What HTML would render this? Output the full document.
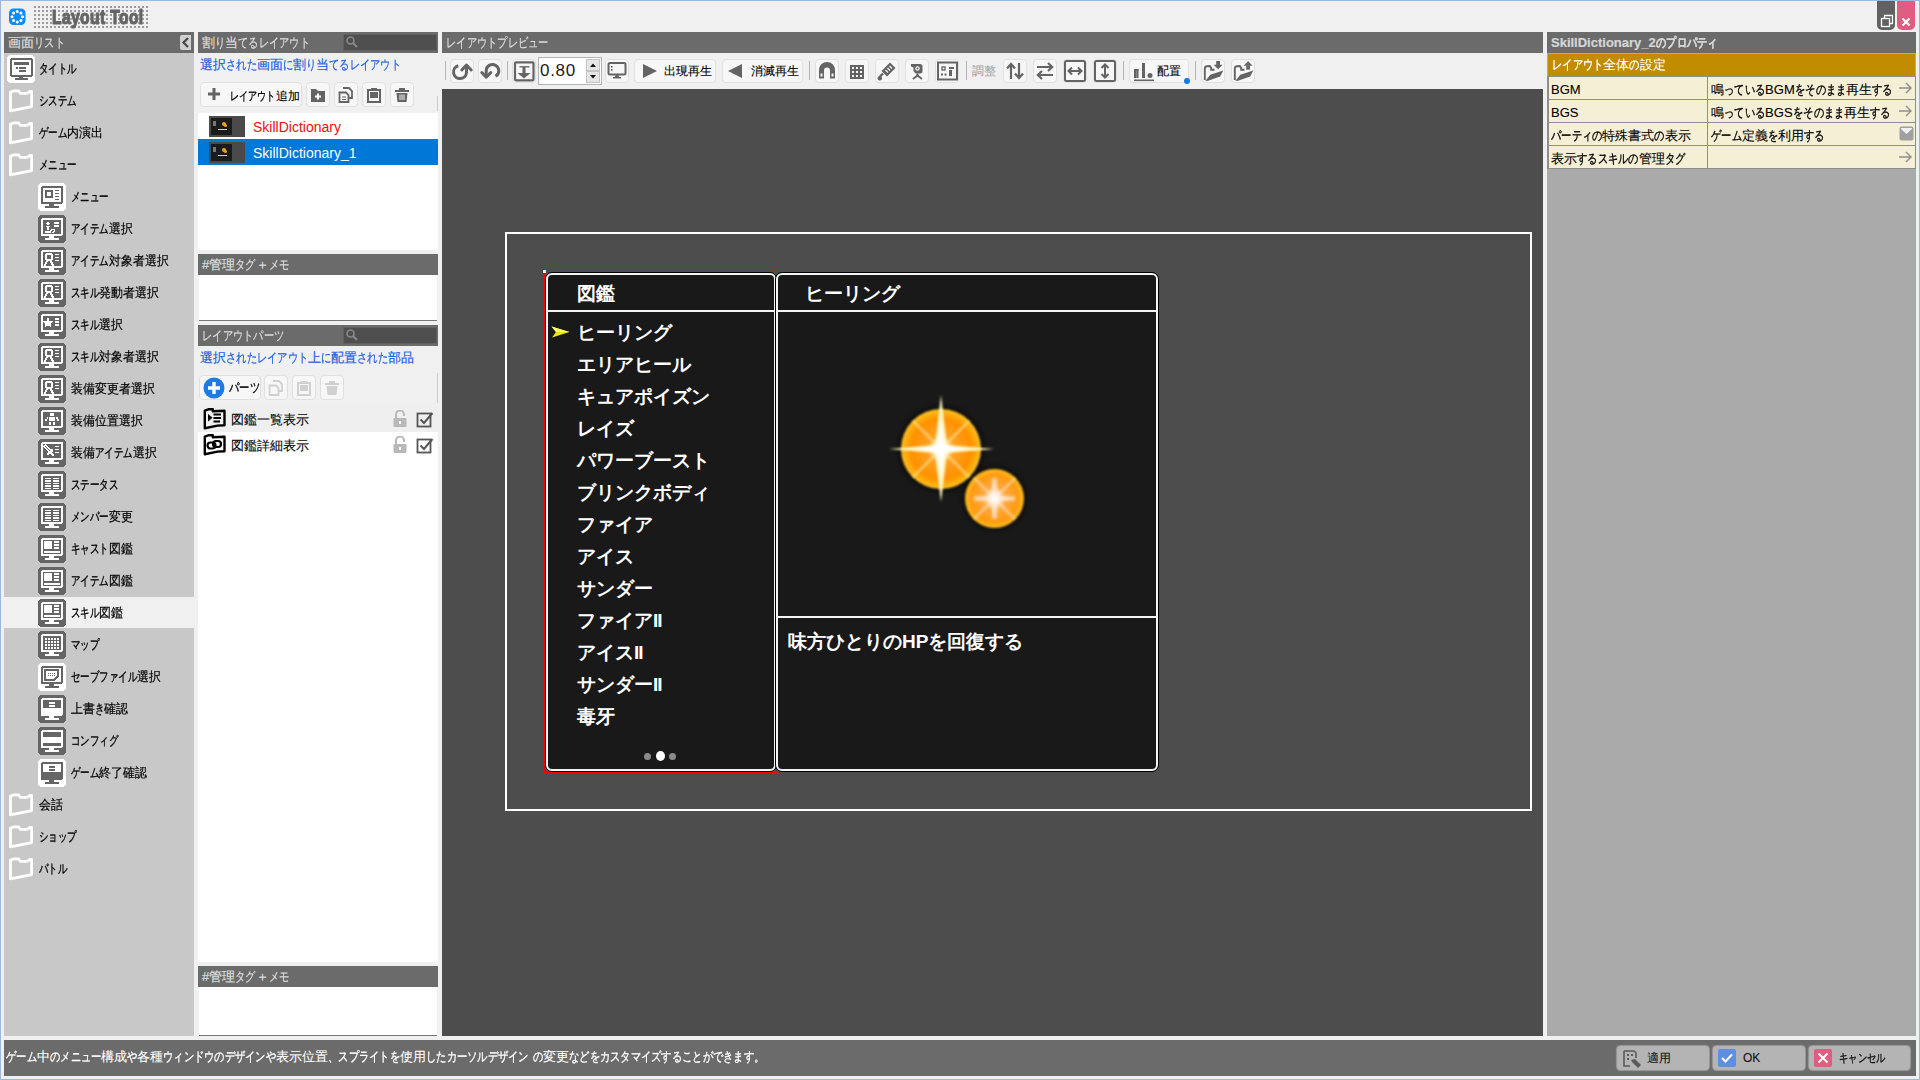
<!DOCTYPE html>
<html><head><meta charset="utf-8"><style>
*{box-sizing:border-box;margin:0;padding:0}
html,body{width:1920px;height:1080px;overflow:hidden}
body{position:relative;background:#f0f0f0;font-family:"Liberation Sans",sans-serif;font-size:13px;color:#000}
.a{position:absolute}
svg.a{display:block}
.hdr{position:absolute;background:#6b6b6b;color:#dedede;font-size:13px;line-height:21px;padding-left:4px;white-space:nowrap}
.srch{position:absolute;background:#4f4f4f;border:1px solid #616161}
.blue{position:absolute;color:#1e60e6;font-size:13px;white-space:nowrap;line-height:16px}
.btn{position:absolute;background:#f7f7f7;border:1px solid #e0e0e0;border-radius:4px}
.lt{font-size:13px;line-height:16px;white-space:nowrap;-webkit-text-stroke:0.1px currentColor}
.lt .k{-webkit-text-stroke:0.35px currentColor}
.lt .h{-webkit-text-stroke:0.2px currentColor}
.blue,.hdr{-webkit-text-stroke:0.2px currentColor}
.s12{-webkit-text-stroke:0.1px currentColor}
</style></head><body>
<div class="a" style="left:0;top:0;width:1920px;height:1080px;border:1px solid #9cb9da"></div>
<div class="hdr" style="left:4px;top:32px;width:190px;height:21px">画面<span class="k" style="display:inline-block;transform:scaleX(0.79);transform-origin:0 0;margin-right:-8.19px">リスト</span></div>
<div class="a" style="left:180px;top:35px;width:11px;height:15px;background:#d0d0d0;border-radius:2px 0 0 2px"></div>
<svg class="a" style="left:180px;top:35px" width="11" height="15" viewBox="0 0 11 15"><path d="M8 3 L3.5 7.5 L8 12" fill="none" stroke="#4a4a4a" stroke-width="2.3"/></svg>
<div class="a" style="left:4px;top:53px;width:190px;height:983px;background:#c8c8c8"></div>
<div class="a" style="left:4px;top:597px;width:190px;height:31px;background:#f0f0f0"></div>
<div class="a" style="left:7px;top:55px"><svg width="28" height="28" viewBox="0 0 28 28" shape-rendering="crispEdges"><rect x="0" y="0" width="28" height="28" rx="4" fill="#fff"/><rect x="4" y="4" width="21" height="17" fill="none" stroke="#656565" stroke-width="2.2" rx="1.5"/><rect x="7" y="7" width="15" height="3" fill="#656565"/><rect x="9" y="12" width="1.6" height="1.6" fill="#656565"/><rect x="12" y="12" width="7" height="1.6" fill="#656565"/><rect x="12" y="15" width="7" height="1.6" fill="#656565"/><rect x="12" y="21" width="4" height="2" fill="#656565"/><rect x="8" y="23" width="13" height="2" fill="#656565"/></svg></div>
<div class="a lt" style="left:39px;top:61px"><span class="k" style="display:inline-block;transform:scaleX(0.73);transform-origin:0 0;margin-right:-14.04px">タイトル</span></div>
<div class="a" style="left:8px;top:89px"><svg width="26" height="24" viewBox="0 0 26 24"><path d="M2.5 3.2 L6 1.8 L10.5 1.8 L12.5 4.3 L19 4.3 L22.5 2.3 L23.6 2.3 L23.6 17.6 L2.5 21.8 Z" fill="none" stroke="#fff" stroke-width="2.8" stroke-linejoin="round"/></svg></div>
<div class="a lt" style="left:39px;top:93px"><span class="k" style="display:inline-block;transform:scaleX(0.73);transform-origin:0 0;margin-right:-14.04px">システム</span></div>
<div class="a" style="left:8px;top:121px"><svg width="26" height="24" viewBox="0 0 26 24"><path d="M2.5 3.2 L6 1.8 L10.5 1.8 L12.5 4.3 L19 4.3 L22.5 2.3 L23.6 2.3 L23.6 17.6 L2.5 21.8 Z" fill="none" stroke="#fff" stroke-width="2.8" stroke-linejoin="round"/></svg></div>
<div class="a lt" style="left:39px;top:125px"><span class="k" style="display:inline-block;transform:scaleX(0.73);transform-origin:0 0;margin-right:-10.53px">ゲーム</span><span class="h" style="display:inline-block;transform:scaleX(0.92);transform-origin:0 0;margin-right:-3.12px">内演出</span></div>
<div class="a" style="left:8px;top:153px"><svg width="26" height="24" viewBox="0 0 26 24"><path d="M2.5 3.2 L6 1.8 L10.5 1.8 L12.5 4.3 L19 4.3 L22.5 2.3 L23.6 2.3 L23.6 17.6 L2.5 21.8 Z" fill="none" stroke="#fff" stroke-width="2.8" stroke-linejoin="round"/></svg></div>
<div class="a lt" style="left:39px;top:157px"><span class="k" style="display:inline-block;transform:scaleX(0.73);transform-origin:0 0;margin-right:-14.04px">メニュー</span></div>
<div class="a" style="left:38px;top:183px"><svg width="28" height="28" viewBox="0 0 28 28" shape-rendering="crispEdges"><rect x="0" y="0" width="28" height="28" rx="4" fill="#fff"/><rect x="4" y="4" width="20" height="16" fill="none" stroke="#656565" stroke-width="2" rx="1"/><rect x="11" y="21" width="5" height="2" fill="#656565"/><rect x="7" y="23" width="14" height="2" fill="#656565"/><rect x="8" y="7.5" width="6" height="6" fill="none" stroke="#656565" stroke-width="2"/><rect x="17" y="6.5" width="4" height="1.6" fill="#656565"/><rect x="17" y="9.5" width="4" height="1.6" fill="#656565"/><rect x="17" y="12.5" width="4" height="1.6" fill="#656565"/><rect x="17" y="15.5" width="4" height="1.6" fill="#656565"/></svg></div>
<div class="a lt" style="left:71px;top:189px"><span class="k" style="display:inline-block;transform:scaleX(0.73);transform-origin:0 0;margin-right:-14.04px">メニュー</span></div>
<div class="a" style="left:38px;top:215px"><svg width="28" height="28" viewBox="0 0 28 28" shape-rendering="crispEdges"><rect x="0" y="0" width="28" height="28" rx="4" fill="#656565"/><rect x="4" y="4" width="20" height="16" fill="none" stroke="#fff" stroke-width="2" rx="1"/><rect x="11" y="21" width="5" height="2" fill="#fff"/><rect x="7" y="23" width="14" height="2" fill="#fff"/><circle cx="10" cy="8.5" r="1.6" fill="#fff"/><rect x="8" y="10.5" width="4" height="1.6" fill="#fff"/><rect x="9.3" y="11" width="1.6" height="4" fill="#fff"/><path d="M6.5 15.5 L13.5 15.5 L12.5 18 L7.5 18 Z" fill="#fff"/><path d="M13 16 Q15 13 16.5 15 Q16 17.5 14 17.5" fill="none" stroke="#fff" stroke-width="1.4"/><rect x="16" y="7" width="5" height="1.6" fill="#fff"/><rect x="16" y="10" width="5" height="1.6" fill="#fff"/></svg></div>
<div class="a lt" style="left:71px;top:221px"><span class="k" style="display:inline-block;transform:scaleX(0.73);transform-origin:0 0;margin-right:-14.04px">アイテム</span><span class="h" style="display:inline-block;transform:scaleX(0.92);transform-origin:0 0;margin-right:-2.08px">選択</span></div>
<div class="a" style="left:38px;top:247px"><svg width="28" height="28" viewBox="0 0 28 28" shape-rendering="crispEdges"><rect x="0" y="0" width="28" height="28" rx="4" fill="#656565"/><rect x="4" y="4" width="20" height="16" fill="none" stroke="#fff" stroke-width="2" rx="1"/><rect x="11" y="21" width="5" height="2" fill="#fff"/><rect x="7" y="23" width="14" height="2" fill="#fff"/><circle cx="11" cy="10" r="3.4" fill="none" stroke="#fff" stroke-width="2"/><path d="M6.5 19.5 L9.5 13.5 M15.5 19.5 L12.5 13.5" stroke="#fff" stroke-width="1.8"/><rect x="16.5" y="6.5" width="4.5" height="1.6" fill="#fff"/><rect x="16.5" y="9.5" width="4.5" height="1.6" fill="#fff"/><rect x="16.5" y="12.5" width="4.5" height="1.6" fill="#fff"/></svg></div>
<div class="a lt" style="left:71px;top:253px"><span class="k" style="display:inline-block;transform:scaleX(0.73);transform-origin:0 0;margin-right:-14.04px">アイテム</span><span class="h" style="display:inline-block;transform:scaleX(0.92);transform-origin:0 0;margin-right:-5.20px">対象者選択</span></div>
<div class="a" style="left:38px;top:279px"><svg width="28" height="28" viewBox="0 0 28 28" shape-rendering="crispEdges"><rect x="0" y="0" width="28" height="28" rx="4" fill="#656565"/><rect x="4" y="4" width="20" height="16" fill="none" stroke="#fff" stroke-width="2" rx="1"/><rect x="11" y="21" width="5" height="2" fill="#fff"/><rect x="7" y="23" width="14" height="2" fill="#fff"/><circle cx="11" cy="10" r="3.4" fill="none" stroke="#fff" stroke-width="2"/><path d="M6.5 19.5 L9.5 13.5 M15.5 19.5 L12.5 13.5" stroke="#fff" stroke-width="1.8"/><rect x="16.5" y="6.5" width="4.5" height="1.6" fill="#fff"/><rect x="16.5" y="9.5" width="4.5" height="1.6" fill="#fff"/><rect x="16.5" y="12.5" width="4.5" height="1.6" fill="#fff"/></svg></div>
<div class="a lt" style="left:71px;top:285px"><span class="k" style="display:inline-block;transform:scaleX(0.73);transform-origin:0 0;margin-right:-10.53px">スキル</span><span class="h" style="display:inline-block;transform:scaleX(0.92);transform-origin:0 0;margin-right:-5.20px">発動者選択</span></div>
<div class="a" style="left:38px;top:311px"><svg width="28" height="28" viewBox="0 0 28 28" shape-rendering="crispEdges"><rect x="0" y="0" width="28" height="28" rx="4" fill="#656565"/><rect x="4" y="4" width="20" height="16" fill="none" stroke="#fff" stroke-width="2" rx="1"/><rect x="11" y="21" width="5" height="2" fill="#fff"/><rect x="7" y="23" width="14" height="2" fill="#fff"/><path d="M10 6 L11.6 10.2 L15.6 10.2 L12.4 12.8 L13.6 17 L10 14.4 L6.4 17 L7.6 12.8 L4.4 10.2 L8.4 10.2 Z" fill="#fff"/><rect x="17" y="7" width="4" height="1.6" fill="#fff"/><rect x="17" y="10" width="4" height="1.6" fill="#fff"/><rect x="17" y="13" width="4" height="1.6" fill="#fff"/></svg></div>
<div class="a lt" style="left:71px;top:317px"><span class="k" style="display:inline-block;transform:scaleX(0.73);transform-origin:0 0;margin-right:-10.53px">スキル</span><span class="h" style="display:inline-block;transform:scaleX(0.92);transform-origin:0 0;margin-right:-2.08px">選択</span></div>
<div class="a" style="left:38px;top:343px"><svg width="28" height="28" viewBox="0 0 28 28" shape-rendering="crispEdges"><rect x="0" y="0" width="28" height="28" rx="4" fill="#656565"/><rect x="4" y="4" width="20" height="16" fill="none" stroke="#fff" stroke-width="2" rx="1"/><rect x="11" y="21" width="5" height="2" fill="#fff"/><rect x="7" y="23" width="14" height="2" fill="#fff"/><circle cx="11" cy="10" r="3.4" fill="none" stroke="#fff" stroke-width="2"/><path d="M6.5 19.5 L9.5 13.5 M15.5 19.5 L12.5 13.5" stroke="#fff" stroke-width="1.8"/><rect x="16.5" y="6.5" width="4.5" height="1.6" fill="#fff"/><rect x="16.5" y="9.5" width="4.5" height="1.6" fill="#fff"/><rect x="16.5" y="12.5" width="4.5" height="1.6" fill="#fff"/></svg></div>
<div class="a lt" style="left:71px;top:349px"><span class="k" style="display:inline-block;transform:scaleX(0.73);transform-origin:0 0;margin-right:-10.53px">スキル</span><span class="h" style="display:inline-block;transform:scaleX(0.92);transform-origin:0 0;margin-right:-5.20px">対象者選択</span></div>
<div class="a" style="left:38px;top:375px"><svg width="28" height="28" viewBox="0 0 28 28" shape-rendering="crispEdges"><rect x="0" y="0" width="28" height="28" rx="4" fill="#656565"/><rect x="4" y="4" width="20" height="16" fill="none" stroke="#fff" stroke-width="2" rx="1"/><rect x="11" y="21" width="5" height="2" fill="#fff"/><rect x="7" y="23" width="14" height="2" fill="#fff"/><circle cx="11" cy="10" r="3.4" fill="none" stroke="#fff" stroke-width="2"/><path d="M6.5 19.5 L9.5 13.5 M15.5 19.5 L12.5 13.5" stroke="#fff" stroke-width="1.8"/><rect x="16.5" y="6.5" width="4.5" height="1.6" fill="#fff"/><rect x="16.5" y="9.5" width="4.5" height="1.6" fill="#fff"/><rect x="16.5" y="12.5" width="4.5" height="1.6" fill="#fff"/></svg></div>
<div class="a lt" style="left:71px;top:381px"><span class="h" style="display:inline-block;transform:scaleX(0.92);transform-origin:0 0;margin-right:-7.28px">装備変更者選択</span></div>
<div class="a" style="left:38px;top:407px"><svg width="28" height="28" viewBox="0 0 28 28" shape-rendering="crispEdges"><rect x="0" y="0" width="28" height="28" rx="4" fill="#656565"/><rect x="4" y="4" width="20" height="16" fill="none" stroke="#fff" stroke-width="2" rx="1"/><rect x="11" y="21" width="5" height="2" fill="#fff"/><rect x="7" y="23" width="14" height="2" fill="#fff"/><rect x="12" y="6" width="4" height="2.8" fill="#fff"/><rect x="11" y="10" width="6" height="3.6" fill="#fff"/><rect x="8.5" y="10" width="1.3" height="1.6" fill="#fff"/><rect x="7.2" y="11.5" width="1.5" height="2.1" fill="#fff"/><rect x="18.2" y="10" width="1.3" height="1.6" fill="#fff"/><rect x="19.3" y="11.5" width="1.5" height="2.1" fill="#fff"/><rect x="11" y="15" width="2" height="2.6" fill="#fff"/><rect x="15" y="15" width="2" height="2.6" fill="#fff"/></svg></div>
<div class="a lt" style="left:71px;top:413px"><span class="h" style="display:inline-block;transform:scaleX(0.92);transform-origin:0 0;margin-right:-6.24px">装備位置選択</span></div>
<div class="a" style="left:38px;top:439px"><svg width="28" height="28" viewBox="0 0 28 28" shape-rendering="crispEdges"><rect x="0" y="0" width="28" height="28" rx="4" fill="#656565"/><rect x="4" y="4" width="20" height="16" fill="none" stroke="#fff" stroke-width="2" rx="1"/><rect x="11" y="21" width="5" height="2" fill="#fff"/><rect x="7" y="23" width="14" height="2" fill="#fff"/><path d="M6 7.3 L7.3 6 L14 12.7 L12.7 14 Z" fill="none" stroke="#fff" stroke-width="1.3"/><path d="M9 15.8 L14.8 10" stroke="#fff" stroke-width="1.8"/><path d="M13.5 14.5 L15.8 16.8" stroke="#fff" stroke-width="1.8"/><rect x="16.5" y="6.5" width="4.5" height="1.6" fill="#fff"/><rect x="16.5" y="9.5" width="4.5" height="1.6" fill="#fff"/><rect x="16.5" y="12.5" width="4.5" height="1.6" fill="#fff"/></svg></div>
<div class="a lt" style="left:71px;top:445px"><span class="h" style="display:inline-block;transform:scaleX(0.92);transform-origin:0 0;margin-right:-2.08px">装備</span><span class="k" style="display:inline-block;transform:scaleX(0.73);transform-origin:0 0;margin-right:-14.04px">アイテム</span><span class="h" style="display:inline-block;transform:scaleX(0.92);transform-origin:0 0;margin-right:-2.08px">選択</span></div>
<div class="a" style="left:38px;top:471px"><svg width="28" height="28" viewBox="0 0 28 28" shape-rendering="crispEdges"><rect x="0" y="0" width="28" height="28" rx="4" fill="#656565"/><rect x="4" y="4" width="20" height="16" fill="none" stroke="#fff" stroke-width="2" rx="1"/><rect x="11" y="21" width="5" height="2" fill="#fff"/><rect x="7" y="23" width="14" height="2" fill="#fff"/><rect x="7" y="6.5" width="6" height="1.6" fill="#fff"/><rect x="15" y="6.5" width="6" height="1.6" fill="#fff"/><rect x="7" y="9" width="6" height="1.6" fill="#fff"/><rect x="15" y="9" width="6" height="1.6" fill="#fff"/><rect x="7" y="11.5" width="6" height="1.6" fill="#fff"/><rect x="15" y="11.5" width="6" height="1.6" fill="#fff"/><rect x="7" y="14" width="6" height="1.6" fill="#fff"/><rect x="15" y="14" width="6" height="1.6" fill="#fff"/><rect x="7" y="16.5" width="6" height="1.6" fill="#fff"/><rect x="15" y="16.5" width="6" height="1.6" fill="#fff"/></svg></div>
<div class="a lt" style="left:71px;top:477px"><span class="k" style="display:inline-block;transform:scaleX(0.73);transform-origin:0 0;margin-right:-17.55px">ステータス</span></div>
<div class="a" style="left:38px;top:503px"><svg width="28" height="28" viewBox="0 0 28 28" shape-rendering="crispEdges"><rect x="0" y="0" width="28" height="28" rx="4" fill="#656565"/><rect x="4" y="4" width="20" height="16" fill="none" stroke="#fff" stroke-width="2" rx="1"/><rect x="11" y="21" width="5" height="2" fill="#fff"/><rect x="7" y="23" width="14" height="2" fill="#fff"/><rect x="7" y="6.5" width="6" height="1.6" fill="#fff"/><rect x="15" y="6.5" width="6" height="1.6" fill="#fff"/><rect x="7" y="9" width="6" height="1.6" fill="#fff"/><rect x="15" y="9" width="6" height="1.6" fill="#fff"/><rect x="7" y="11.5" width="6" height="1.6" fill="#fff"/><rect x="15" y="11.5" width="6" height="1.6" fill="#fff"/><rect x="7" y="14" width="6" height="1.6" fill="#fff"/><rect x="15" y="14" width="6" height="1.6" fill="#fff"/><rect x="7" y="16.5" width="6" height="1.6" fill="#fff"/><rect x="15" y="16.5" width="6" height="1.6" fill="#fff"/></svg></div>
<div class="a lt" style="left:71px;top:509px"><span class="k" style="display:inline-block;transform:scaleX(0.73);transform-origin:0 0;margin-right:-14.04px">メンバー</span><span class="h" style="display:inline-block;transform:scaleX(0.92);transform-origin:0 0;margin-right:-2.08px">変更</span></div>
<div class="a" style="left:38px;top:535px"><svg width="28" height="28" viewBox="0 0 28 28" shape-rendering="crispEdges"><rect x="0" y="0" width="28" height="28" rx="4" fill="#656565"/><rect x="4" y="4" width="20" height="16" fill="none" stroke="#fff" stroke-width="2" rx="1"/><rect x="11" y="21" width="5" height="2" fill="#fff"/><rect x="7" y="23" width="14" height="2" fill="#fff"/><rect x="6" y="6" width="8" height="8" fill="#fff"/><rect x="15.5" y="6" width="5.5" height="1.8" fill="#fff"/><rect x="15.5" y="9" width="5.5" height="1.8" fill="#fff"/><rect x="15.5" y="12" width="5.5" height="1.8" fill="#fff"/><rect x="6" y="15.5" width="16" height="2" fill="#fff"/></svg></div>
<div class="a lt" style="left:71px;top:541px"><span class="k" style="display:inline-block;transform:scaleX(0.73);transform-origin:0 0;margin-right:-14.04px">キャスト</span><span class="h" style="display:inline-block;transform:scaleX(0.92);transform-origin:0 0;margin-right:-2.08px">図鑑</span></div>
<div class="a" style="left:38px;top:567px"><svg width="28" height="28" viewBox="0 0 28 28" shape-rendering="crispEdges"><rect x="0" y="0" width="28" height="28" rx="4" fill="#656565"/><rect x="4" y="4" width="20" height="16" fill="none" stroke="#fff" stroke-width="2" rx="1"/><rect x="11" y="21" width="5" height="2" fill="#fff"/><rect x="7" y="23" width="14" height="2" fill="#fff"/><rect x="6" y="6" width="8" height="8" fill="#fff"/><rect x="15.5" y="6" width="5.5" height="1.8" fill="#fff"/><rect x="15.5" y="9" width="5.5" height="1.8" fill="#fff"/><rect x="15.5" y="12" width="5.5" height="1.8" fill="#fff"/><rect x="6" y="15.5" width="16" height="2" fill="#fff"/></svg></div>
<div class="a lt" style="left:71px;top:573px"><span class="k" style="display:inline-block;transform:scaleX(0.73);transform-origin:0 0;margin-right:-14.04px">アイテム</span><span class="h" style="display:inline-block;transform:scaleX(0.92);transform-origin:0 0;margin-right:-2.08px">図鑑</span></div>
<div class="a" style="left:38px;top:599px"><svg width="28" height="28" viewBox="0 0 28 28" shape-rendering="crispEdges"><rect x="0" y="0" width="28" height="28" rx="4" fill="#656565"/><rect x="4" y="4" width="20" height="16" fill="none" stroke="#fff" stroke-width="2" rx="1"/><rect x="11" y="21" width="5" height="2" fill="#fff"/><rect x="7" y="23" width="14" height="2" fill="#fff"/><rect x="6" y="6" width="8" height="8" fill="#fff"/><rect x="15.5" y="6" width="5.5" height="1.8" fill="#fff"/><rect x="15.5" y="9" width="5.5" height="1.8" fill="#fff"/><rect x="15.5" y="12" width="5.5" height="1.8" fill="#fff"/><rect x="6" y="15.5" width="16" height="2" fill="#fff"/></svg></div>
<div class="a lt" style="left:71px;top:605px"><span class="k" style="display:inline-block;transform:scaleX(0.73);transform-origin:0 0;margin-right:-10.53px">スキル</span><span class="h" style="display:inline-block;transform:scaleX(0.92);transform-origin:0 0;margin-right:-2.08px">図鑑</span></div>
<div class="a" style="left:38px;top:631px"><svg width="28" height="28" viewBox="0 0 28 28" shape-rendering="crispEdges"><rect x="0" y="0" width="28" height="28" rx="4" fill="#656565"/><rect x="4" y="4" width="20" height="16" fill="none" stroke="#fff" stroke-width="2" rx="1"/><rect x="11" y="21" width="5" height="2" fill="#fff"/><rect x="7" y="23" width="14" height="2" fill="#fff"/><rect x="6.5" y="6.5" width="2" height="2" fill="#fff"/><rect x="9.5" y="6.5" width="2" height="2" fill="#fff"/><rect x="12.5" y="6.5" width="2" height="2" fill="#fff"/><rect x="15.5" y="6.5" width="2" height="2" fill="#fff"/><rect x="18.5" y="6.5" width="2" height="2" fill="#fff"/><rect x="6.5" y="9.5" width="2" height="2" fill="#fff"/><rect x="9.5" y="9.5" width="2" height="2" fill="#fff"/><rect x="12.5" y="9.5" width="2" height="2" fill="#fff"/><rect x="15.5" y="9.5" width="2" height="2" fill="#fff"/><rect x="18.5" y="9.5" width="2" height="2" fill="#fff"/><rect x="6.5" y="12.5" width="2" height="2" fill="#fff"/><rect x="9.5" y="12.5" width="2" height="2" fill="#fff"/><rect x="12.5" y="12.5" width="2" height="2" fill="#fff"/><rect x="15.5" y="12.5" width="2" height="2" fill="#fff"/><rect x="18.5" y="12.5" width="2" height="2" fill="#fff"/><rect x="6.5" y="15.5" width="2" height="2" fill="#fff"/><rect x="9.5" y="15.5" width="2" height="2" fill="#fff"/><rect x="12.5" y="15.5" width="2" height="2" fill="#fff"/><rect x="15.5" y="15.5" width="2" height="2" fill="#fff"/><rect x="18.5" y="15.5" width="2" height="2" fill="#fff"/></svg></div>
<div class="a lt" style="left:71px;top:637px"><span class="k" style="display:inline-block;transform:scaleX(0.73);transform-origin:0 0;margin-right:-10.53px">マップ</span></div>
<div class="a" style="left:38px;top:663px"><svg width="28" height="28" viewBox="0 0 28 28" shape-rendering="crispEdges"><rect x="0" y="0" width="28" height="28" rx="4" fill="#fff"/><rect x="4" y="4" width="20" height="16" fill="none" stroke="#656565" stroke-width="2" rx="1"/><rect x="11" y="21" width="5" height="2" fill="#656565"/><rect x="7" y="23" width="14" height="2" fill="#656565"/><path d="M7 7 L19.5 7 L19.5 13.5 L16.5 16.5 L7 16.5 Z" fill="none" stroke="#656565" stroke-width="2"/><rect x="9.5" y="9.5" width="1.2" height="1.2" fill="#656565"/><rect x="11.5" y="9.5" width="1.2" height="1.2" fill="#656565"/><rect x="13.5" y="9.5" width="1.2" height="1.2" fill="#656565"/><rect x="15.5" y="9.5" width="1.2" height="1.2" fill="#656565"/><rect x="9.5" y="12" width="1.2" height="1.2" fill="#656565"/><rect x="11.5" y="12" width="1.2" height="1.2" fill="#656565"/><rect x="13.5" y="12" width="1.2" height="1.2" fill="#656565"/><rect x="15.5" y="12" width="1.2" height="1.2" fill="#656565"/></svg></div>
<div class="a lt" style="left:71px;top:669px"><span class="k" style="display:inline-block;transform:scaleX(0.73);transform-origin:0 0;margin-right:-24.57px">セーブファイル</span><span class="h" style="display:inline-block;transform:scaleX(0.92);transform-origin:0 0;margin-right:-2.08px">選択</span></div>
<div class="a" style="left:38px;top:695px"><svg width="28" height="28" viewBox="0 0 28 28" shape-rendering="crispEdges"><rect x="0" y="0" width="28" height="28" rx="4" fill="#656565"/><rect x="4" y="4" width="20" height="16" fill="none" stroke="#fff" stroke-width="2" rx="1"/><rect x="11" y="21" width="5" height="2" fill="#fff"/><rect x="7" y="23" width="14" height="2" fill="#fff"/><rect x="11" y="7" width="6" height="1.8" fill="#fff"/><rect x="11" y="10" width="6" height="1.8" fill="#fff"/><rect x="5" y="13" width="18" height="6" fill="#fff"/></svg></div>
<div class="a lt" style="left:71px;top:701px"><span class="h" style="display:inline-block;transform:scaleX(0.92);transform-origin:0 0;margin-right:-2.08px">上書</span><span class="k" style="display:inline-block;transform:scaleX(0.73);transform-origin:0 0;margin-right:-3.51px">き</span><span class="h" style="display:inline-block;transform:scaleX(0.92);transform-origin:0 0;margin-right:-2.08px">確認</span></div>
<div class="a" style="left:38px;top:727px"><svg width="28" height="28" viewBox="0 0 28 28" shape-rendering="crispEdges"><rect x="0" y="0" width="28" height="28" rx="4" fill="#656565"/><rect x="4" y="4" width="20" height="16" fill="none" stroke="#fff" stroke-width="2" rx="1"/><rect x="11" y="21" width="5" height="2" fill="#fff"/><rect x="7" y="23" width="14" height="2" fill="#fff"/><rect x="5" y="10" width="18" height="6" fill="#fff"/></svg></div>
<div class="a lt" style="left:71px;top:733px"><span class="k" style="display:inline-block;transform:scaleX(0.73);transform-origin:0 0;margin-right:-17.55px">コンフィグ</span></div>
<div class="a" style="left:38px;top:759px"><svg width="28" height="28" viewBox="0 0 28 28" shape-rendering="crispEdges"><rect x="0" y="0" width="28" height="28" rx="4" fill="#fff"/><rect x="4" y="4" width="20" height="16" fill="none" stroke="#656565" stroke-width="2" rx="1"/><rect x="11" y="21" width="5" height="2" fill="#656565"/><rect x="7" y="23" width="14" height="2" fill="#656565"/><rect x="11" y="7" width="6" height="1.8" fill="#656565"/><rect x="11" y="10" width="6" height="1.8" fill="#656565"/><rect x="5" y="13" width="18" height="6" fill="#656565"/></svg></div>
<div class="a lt" style="left:71px;top:765px"><span class="k" style="display:inline-block;transform:scaleX(0.73);transform-origin:0 0;margin-right:-10.53px">ゲーム</span><span class="h" style="display:inline-block;transform:scaleX(0.92);transform-origin:0 0;margin-right:-4.16px">終了確認</span></div>
<div class="a" style="left:8px;top:793px"><svg width="26" height="24" viewBox="0 0 26 24"><path d="M2.5 3.2 L6 1.8 L10.5 1.8 L12.5 4.3 L19 4.3 L22.5 2.3 L23.6 2.3 L23.6 17.6 L2.5 21.8 Z" fill="none" stroke="#fff" stroke-width="2.8" stroke-linejoin="round"/></svg></div>
<div class="a lt" style="left:39px;top:797px"><span class="h" style="display:inline-block;transform:scaleX(0.92);transform-origin:0 0;margin-right:-2.08px">会話</span></div>
<div class="a" style="left:8px;top:825px"><svg width="26" height="24" viewBox="0 0 26 24"><path d="M2.5 3.2 L6 1.8 L10.5 1.8 L12.5 4.3 L19 4.3 L22.5 2.3 L23.6 2.3 L23.6 17.6 L2.5 21.8 Z" fill="none" stroke="#fff" stroke-width="2.8" stroke-linejoin="round"/></svg></div>
<div class="a lt" style="left:39px;top:829px"><span class="k" style="display:inline-block;transform:scaleX(0.73);transform-origin:0 0;margin-right:-14.04px">ショップ</span></div>
<div class="a" style="left:8px;top:857px"><svg width="26" height="24" viewBox="0 0 26 24"><path d="M2.5 3.2 L6 1.8 L10.5 1.8 L12.5 4.3 L19 4.3 L22.5 2.3 L23.6 2.3 L23.6 17.6 L2.5 21.8 Z" fill="none" stroke="#fff" stroke-width="2.8" stroke-linejoin="round"/></svg></div>
<div class="a lt" style="left:39px;top:861px"><span class="k" style="display:inline-block;transform:scaleX(0.73);transform-origin:0 0;margin-right:-10.53px">バトル</span></div>
<svg class="a" style="left:8px;top:7px" width="19" height="19" viewBox="0 0 19 19"><rect x="1" y="1.5" width="16.5" height="16.5" rx="4.5" fill="#0a8cf5"/><circle cx="14.45" cy="9.75" r="1.5" fill="#fff"/><circle cx="12.93" cy="13.43" r="1.5" fill="#fff"/><circle cx="9.25" cy="14.95" r="1.5" fill="#fff"/><circle cx="5.57" cy="13.43" r="1.5" fill="#fff"/><circle cx="4.05" cy="9.75" r="1.5" fill="#fff"/><circle cx="5.57" cy="6.07" r="1.5" fill="#fff"/><circle cx="9.25" cy="4.55" r="1.5" fill="#fff"/><circle cx="12.93" cy="6.07" r="1.5" fill="#fff"/></svg>
<div class="a" style="left:34px;top:6px;width:115px;height:23px;background-image:linear-gradient(90deg,#f0f0f0 2px,transparent 2px),linear-gradient(#f0f0f0 2px,transparent 2px);background-size:4px 4px;background-position:2px 2px;background-color:#9a9a9a;"></div>
<div class="a" style="left:52px;top:5px;font-family:'Liberation Sans',sans-serif;font-weight:bold;font-size:20px;line-height:24px;color:#656565;white-space:nowrap;transform:scaleX(0.78);transform-origin:0 0;-webkit-text-stroke:1.2px #656565;letter-spacing:0.5px;text-shadow:0 0 1px #f0f0f0,0 0 2px #f0f0f0">Layout Tool</div>
<div class="a" style="left:1877px;top:1px;width:18px;height:29px;background:#616161;border-radius:0 0 5px 5px"></div>
<svg class="a" style="left:1877px;top:1px" width="18" height="29" viewBox="0 0 18 29"><rect x="4.5" y="17.5" width="8" height="8" fill="none" stroke="#fff" stroke-width="1.3"/><path d="M7.5 17.5 V14.5 H15.5 V22.5 H12.5" fill="none" stroke="#fff" stroke-width="1.3"/></svg>
<div class="a" style="left:1897px;top:1px;width:18px;height:29px;background:#e05c80;border-radius:0 0 5px 5px"></div>
<svg class="a" style="left:1897px;top:1px" width="18" height="29" viewBox="0 0 18 29"><path d="M5.5 17.5 L12.5 24.5 M12.5 17.5 L5.5 24.5" stroke="#fff" stroke-width="2.2"/></svg>
<div class="a" style="left:4px;top:1040px;width:1912px;height:36px;background:#6b6b6b"></div>
<div class="a lt" style="left:6px;top:1049px;color:#fff"><span class="k" style="display:inline-block;transform:scaleX(0.79);transform-origin:0 0;margin-right:-8.19px">ゲーム</span>中<span class="k" style="display:inline-block;transform:scaleX(0.79);transform-origin:0 0;margin-right:-13.65px">のメニュー</span>構成<span class="k" style="display:inline-block;transform:scaleX(0.79);transform-origin:0 0;margin-right:-2.73px">や</span>各種<span class="k" style="display:inline-block;transform:scaleX(0.79);transform-origin:0 0;margin-right:-30.03px">ウィンドウのデザインや</span>表示位置<span class="k" style="display:inline-block;transform:scaleX(0.79);transform-origin:0 0;margin-right:-19.11px">、スプライトを</span>使用<span class="k" style="display:inline-block;transform:scaleX(0.79);transform-origin:0 0;margin-right:-27.30px">したカーソルデザイン</span> <span class="k" style="display:inline-block;transform:scaleX(0.79);transform-origin:0 0;margin-right:-2.73px">の</span>変更<span class="k" style="display:inline-block;transform:scaleX(0.79);transform-origin:0 0;margin-right:-51.87px">などをカスタマイズすることができます。</span></div>
<div class="a" style="left:1617px;top:1046px;width:92px;height:24px;background:#b4b4b4;border-radius:4px;box-shadow:0 0 1px 0.5px #9a9a9a"></div>
<svg class="a" style="left:1622px;top:1049px" width="20" height="20" viewBox="0 0 20 20"><path d="M2 2 H12 L14 4 V9 M2 2 V17 H8" fill="none" stroke="#5a5a5a" stroke-width="1.6"/><rect x="5" y="5" width="2" height="2" fill="#5a5a5a"/><rect x="5" y="9" width="2" height="2" fill="#5a5a5a"/><rect x="9" y="5" width="2" height="2" fill="#5a5a5a"/><path d="M9 11 L13 10 L19 16 L16 19 L10 13 Z" fill="#5a5a5a"/></svg>
<div class="a lt" style="left:1647px;top:1050px;color:#111;font-size:12px">適用</div>
<div class="a" style="left:1713px;top:1046px;width:92px;height:24px;background:#b4b4b4;border-radius:4px;box-shadow:0 0 1px 0.5px #9a9a9a"></div>
<div class="a" style="left:1718px;top:1049px;width:18px;height:18px;background:#5f8fe0;border-radius:2px"></div>
<svg class="a" style="left:1718px;top:1049px" width="18" height="18" viewBox="0 0 18 18"><path d="M4 9 L7.5 12.5 L14 5.5" fill="none" stroke="#fff" stroke-width="2"/></svg>
<div class="a lt" style="left:1743px;top:1050px;color:#111;font-size:12px">OK</div>
<div class="a" style="left:1809px;top:1046px;width:101px;height:24px;background:#b4b4b4;border-radius:4px;box-shadow:0 0 1px 0.5px #9a9a9a"></div>
<div class="a" style="left:1814px;top:1049px;width:18px;height:18px;background:#e05c80;border-radius:2px"></div>
<svg class="a" style="left:1814px;top:1049px" width="18" height="18" viewBox="0 0 18 18"><path d="M4.5 4.5 L13.5 13.5 M13.5 4.5 L4.5 13.5" fill="none" stroke="#fff" stroke-width="2"/></svg>
<div class="a lt" style="left:1839px;top:1050px;color:#111;font-size:12px"><span class="k" style="display:inline-block;transform:scaleX(0.78);transform-origin:0 0;margin-right:-13.20px">キャンセル</span></div>
<div class="hdr" style="left:198px;top:32px;width:240px;height:21px">割<span class="k" style="display:inline-block;transform:scaleX(0.79);transform-origin:0 0;margin-right:-2.73px">り</span>当<span class="k" style="display:inline-block;transform:scaleX(0.79);transform-origin:0 0;margin-right:-19.11px">てるレイアウト</span></div>
<div class="srch" style="left:343px;top:34px;width:94px;height:17px"></div><svg class="a" style="left:345px;top:35px" width="14" height="14" viewBox="0 0 14 14"><circle cx="5.5" cy="5.5" r="3.5" fill="none" stroke="#8a8a8a" stroke-width="1.6"/><path d="M8 8 L12 12" stroke="#8a8a8a" stroke-width="2"/></svg>
<div class="blue" style="left:200px;top:57px">選択<span class="k" style="display:inline-block;transform:scaleX(0.79);transform-origin:0 0;margin-right:-8.19px">された</span>画面<span class="k" style="display:inline-block;transform:scaleX(0.79);transform-origin:0 0;margin-right:-2.73px">に</span>割<span class="k" style="display:inline-block;transform:scaleX(0.79);transform-origin:0 0;margin-right:-2.73px">り</span>当<span class="k" style="display:inline-block;transform:scaleX(0.79);transform-origin:0 0;margin-right:-19.11px">てるレイアウト</span></div>
<div class="btn" style="left:200px;top:82px;width:102px;height:25px"></div>
<svg class="a" style="left:207px;top:87px" width="14" height="14" viewBox="0 0 14 14"><path d="M7 1 V13 M1 7 H13" stroke="#646464" stroke-width="3"/></svg>
<div class="a lt" style="left:230px;top:88px;font-size:12px"><span class="k" style="display:inline-block;transform:scaleX(0.76);transform-origin:0 0;margin-right:-14.40px">レイアウト</span>追加</div>
<div class="btn" style="left:306px;top:82px;width:24px;height:25px"></div>
<div class="btn" style="left:334px;top:82px;width:24px;height:25px"></div>
<div class="btn" style="left:362px;top:82px;width:24px;height:25px"></div>
<div class="btn" style="left:390px;top:82px;width:24px;height:25px"></div>
<svg class="a" style="left:310px;top:87px" width="16" height="16" viewBox="0 0 16 16"><path d="M1 2 H6 L8 4 H15 V15 H1 Z" fill="#646464"/><path d="M8 6.5 V12.5 M5 9.5 H11" stroke="#fff" stroke-width="2"/></svg>
<svg class="a" style="left:338px;top:87px" width="16" height="16" viewBox="0 0 16 16"><path d="M5 1 H11 L14 4 V11 H10" fill="none" stroke="#646464" stroke-width="1.8"/><path d="M1.5 5.5 H8 L10.5 8 V15 H1.5 Z" fill="none" stroke="#646464" stroke-width="1.8"/><path d="M4 10 H8 M4 12.5 H8" stroke="#646464" stroke-width="1.2"/></svg>
<svg class="a" style="left:366px;top:87px" width="16" height="16" viewBox="0 0 16 16"><rect x="2" y="3" width="12" height="12" fill="none" stroke="#646464" stroke-width="2"/><rect x="4" y="5" width="8" height="6" fill="#646464"/><rect x="5" y="1" width="6" height="3" fill="#646464"/></svg>
<svg class="a" style="left:394px;top:87px" width="16" height="16" viewBox="0 0 16 16"><rect x="1" y="3" width="14" height="2" fill="#646464"/><rect x="5" y="1" width="6" height="2" fill="#646464"/><path d="M2.5 6 H13.5 L12.5 15 H3.5 Z" fill="#646464"/><path d="M6 7.5 V13 M8 7.5 V13 M10 7.5 V13" stroke="#f7f7f7" stroke-width="1"/></svg>
<div class="a" style="left:437px;top:96px;width:1px;height:15px;background:#ccc"></div>
<div class="a" style="left:198px;top:113px;width:240px;height:137px;background:#fff"></div>
<div class="a" style="left:198px;top:139px;width:240px;height:26px;background:#0078d7"></div>
<div class="a" style="left:209px;top:116px;width:36px;height:21px;background:#4a4a4a"></div><div class="a" style="left:211px;top:118px;width:21px;height:17px;background:#1b1b1b"></div><div class="a" style="left:222px;top:122px;width:4px;height:4px;border-radius:50%;background:#f0a020"></div><div class="a" style="left:224px;top:124px;width:3px;height:3px;border-radius:50%;background:#f0a020"></div><div class="a" style="left:218px;top:129px;width:9px;height:1px;background:#ccc"></div><div class="a" style="left:213px;top:121px;width:3px;height:5px;background:#777"></div>
<div class="a" style="left:209px;top:142px;width:36px;height:21px;background:#4a4a4a"></div><div class="a" style="left:211px;top:144px;width:21px;height:17px;background:#1b1b1b"></div><div class="a" style="left:222px;top:148px;width:4px;height:4px;border-radius:50%;background:#f0a020"></div><div class="a" style="left:224px;top:150px;width:3px;height:3px;border-radius:50%;background:#f0a020"></div><div class="a" style="left:218px;top:155px;width:9px;height:1px;background:#ccc"></div><div class="a" style="left:213px;top:147px;width:3px;height:5px;background:#777"></div>
<div class="a" style="left:253px;top:119px;font-size:14px;line-height:16px;color:#e81010">SkillDictionary</div>
<div class="a" style="left:253px;top:145px;font-size:14px;line-height:16px;color:#fff">SkillDictionary_1</div>
<div class="hdr" style="left:198px;top:254px;width:240px;height:21px">#管理<span class="k" style="display:inline-block;transform:scaleX(0.79);transform-origin:0 0;margin-right:-5.46px">タグ</span>＋<span class="k" style="display:inline-block;transform:scaleX(0.79);transform-origin:0 0;margin-right:-5.46px">メモ</span></div>
<div class="a" style="left:199px;top:275px;width:238px;height:46px;background:#fff;border-bottom:1px solid #777"></div>
<div class="hdr" style="left:198px;top:325px;width:240px;height:21px"><span class="k" style="display:inline-block;transform:scaleX(0.79);transform-origin:0 0;margin-right:-21.84px">レイアウトパーツ</span></div>
<div class="srch" style="left:343px;top:327px;width:94px;height:17px"></div><svg class="a" style="left:345px;top:328px" width="14" height="14" viewBox="0 0 14 14"><circle cx="5.5" cy="5.5" r="3.5" fill="none" stroke="#8a8a8a" stroke-width="1.6"/><path d="M8 8 L12 12" stroke="#8a8a8a" stroke-width="2"/></svg>
<div class="blue" style="left:200px;top:350px">選択<span class="k" style="display:inline-block;transform:scaleX(0.79);transform-origin:0 0;margin-right:-21.84px">されたレイアウト</span>上<span class="k" style="display:inline-block;transform:scaleX(0.79);transform-origin:0 0;margin-right:-2.73px">に</span>配置<span class="k" style="display:inline-block;transform:scaleX(0.79);transform-origin:0 0;margin-right:-8.19px">された</span>部品</div>
<div class="btn" style="left:199px;top:375px;width:62px;height:25px"></div>
<svg class="a" style="left:203px;top:377px" width="22" height="22" viewBox="0 0 22 22"><circle cx="11" cy="11" r="10.5" fill="#1e7be6"/><path d="M11 5 V17 M5 11 H17" stroke="#fff" stroke-width="3.4"/></svg>
<div class="a lt" style="left:229px;top:380px"><span class="k" style="display:inline-block;transform:scaleX(0.79);transform-origin:0 0;margin-right:-8.19px">パーツ</span></div>
<div class="btn" style="left:264px;top:375px;width:24px;height:25px"></div>
<div class="btn" style="left:292px;top:375px;width:24px;height:25px"></div>
<div class="btn" style="left:320px;top:375px;width:24px;height:25px"></div>
<svg class="a" style="left:268px;top:380px" width="16" height="16" viewBox="0 0 16 16"><path d="M5 1 H11 L14 4 V11 H10" fill="none" stroke="#d0d0d0" stroke-width="1.8"/><path d="M1.5 5.5 H8 L10.5 8 V15 H1.5 Z" fill="none" stroke="#d0d0d0" stroke-width="1.8"/></svg>
<svg class="a" style="left:296px;top:380px" width="16" height="16" viewBox="0 0 16 16"><rect x="2" y="3" width="12" height="12" fill="none" stroke="#d0d0d0" stroke-width="2"/><rect x="4" y="5" width="8" height="6" fill="#d0d0d0"/><rect x="5" y="1" width="6" height="3" fill="#d0d0d0"/></svg>
<svg class="a" style="left:324px;top:380px" width="16" height="16" viewBox="0 0 16 16"><rect x="1" y="3" width="14" height="2" fill="#d0d0d0"/><rect x="5" y="1" width="6" height="2" fill="#d0d0d0"/><path d="M2.5 6 H13.5 L12.5 15 H3.5 Z" fill="#d0d0d0"/></svg>
<div class="a" style="left:437px;top:373px;width:1px;height:30px;background:#ccc"></div>
<div class="a" style="left:198px;top:406px;width:240px;height:556px;background:#fff"></div>
<div class="a" style="left:198px;top:406px;width:240px;height:26px;background:#efefef"></div>
<svg class="a" style="left:203px;top:408px" width="24" height="22" viewBox="0 0 24 22"><path d="M1.8 2.6 L6 1.2 L9.8 1.2 L9.8 3.2 L21.5 2.8 L21.5 17.2 L14.5 17.6 L1.8 20.2 Z" fill="none" stroke="#000" stroke-width="2.4" stroke-linejoin="round"/><path d="M5 6 L9.5 9.8 L5 13.6 Z" fill="#000"/><path d="M10.5 6.5 H18 M10.5 10 H18 M10.5 13.5 H17" stroke="#000" stroke-width="2"/></svg>
<svg class="a" style="left:203px;top:434px" width="24" height="22" viewBox="0 0 24 22"><path d="M1.8 2.6 L6 1.2 L9.8 1.2 L9.8 3.2 L21.5 2.8 L21.5 17.2 L14.5 17.6 L1.8 20.2 Z" fill="none" stroke="#000" stroke-width="2.4" stroke-linejoin="round"/><rect x="4.5" y="8.5" width="8" height="6" rx="3" fill="none" stroke="#000" stroke-width="2.2"/><rect x="10" y="7" width="8" height="6" rx="3" fill="none" stroke="#000" stroke-width="2.2"/></svg>
<div class="a lt" style="left:231px;top:412px">図鑑一覧表示</div>
<div class="a lt" style="left:231px;top:438px">図鑑詳細表示</div>
<svg class="a" style="left:392px;top:410px" width="16" height="18" viewBox="0 0 16 18"><path d="M4 8 V4.5 A4 4 0 0 1 12 4.5 V6" fill="none" stroke="#b8b8b8" stroke-width="2"/><rect x="1.5" y="8" width="13" height="9" rx="1" fill="#b8b8b8"/><rect x="7" y="11" width="2" height="3" fill="#fff"/></svg>
<svg class="a" style="left:416px;top:410px" width="18" height="18" viewBox="0 0 18 18"><rect x="1.5" y="3.5" width="13" height="13" fill="none" stroke="#555" stroke-width="1.8"/><path d="M4.5 9.5 L8 13 L16.5 3" fill="none" stroke="#555" stroke-width="2"/></svg>
<svg class="a" style="left:392px;top:436px" width="16" height="18" viewBox="0 0 16 18"><path d="M4 8 V4.5 A4 4 0 0 1 12 4.5 V6" fill="none" stroke="#b8b8b8" stroke-width="2"/><rect x="1.5" y="8" width="13" height="9" rx="1" fill="#b8b8b8"/><rect x="7" y="11" width="2" height="3" fill="#fff"/></svg>
<svg class="a" style="left:416px;top:436px" width="18" height="18" viewBox="0 0 18 18"><rect x="1.5" y="3.5" width="13" height="13" fill="none" stroke="#555" stroke-width="1.8"/><path d="M4.5 9.5 L8 13 L16.5 3" fill="none" stroke="#555" stroke-width="2"/></svg>
<div class="hdr" style="left:198px;top:966px;width:240px;height:21px">#管理<span class="k" style="display:inline-block;transform:scaleX(0.79);transform-origin:0 0;margin-right:-5.46px">タグ</span>＋<span class="k" style="display:inline-block;transform:scaleX(0.79);transform-origin:0 0;margin-right:-5.46px">メモ</span></div>
<div class="a" style="left:199px;top:987px;width:238px;height:49px;background:#fff;border-bottom:1px solid #777"></div>
<div class="hdr" style="left:442px;top:32px;width:1101px;height:21px"><span class="k" style="display:inline-block;transform:scaleX(0.79);transform-origin:0 0;margin-right:-27.30px">レイアウトプレビュー</span></div>
<div class="a" style="left:445px;top:61px;width:1px;height:19px;background:#b4b4b4"></div>
<div class="btn" style="left:450px;top:59px;width:24px;height:24px"></div>
<div class="btn" style="left:478px;top:59px;width:24px;height:24px"></div>
<svg class="a" style="left:450px;top:59px" width="24" height="24" viewBox="0 0 24 24"><path d="M8.3 6.8 A6.5 6.5 0 1 0 16.5 13 V6.5" fill="none" stroke="#646464" stroke-width="3"/><path d="M11.8 11 L16.5 6 L21.2 11" fill="none" stroke="#646464" stroke-width="3" stroke-linecap="round" stroke-linejoin="round"/></svg>
<svg class="a" style="left:478px;top:59px" width="24" height="24" viewBox="0 0 24 24"><path d="M8.2 18 V11.5 A6.3 6.3 0 1 1 17.5 17.3" fill="none" stroke="#646464" stroke-width="3"/><path d="M3.8 13.5 L8.2 18.2 L12.8 13.5" fill="none" stroke="#646464" stroke-width="3" stroke-linecap="round" stroke-linejoin="round"/></svg>
<div class="a" style="left:507px;top:61px;width:1px;height:19px;background:#b4b4b4"></div>
<div class="btn" style="left:512px;top:59px;width:24px;height:24px"></div>
<svg class="a" style="left:512px;top:59px" width="24" height="24" viewBox="0 0 24 24"><rect x="3" y="3.3" width="18.5" height="18" rx="1" fill="none" stroke="#646464" stroke-width="2.2"/><path d="M7.5 7.8 H17.5" stroke="#646464" stroke-width="1.3"/><rect x="10.5" y="8" width="3" height="6" fill="#646464"/><path d="M5.5 14 H18.5 L12 19.5 Z" fill="#646464"/></svg>
<div class="a" style="left:538px;top:57px;width:64px;height:28px;background:#fff;border:1px solid #aeb4bd"></div>
<div class="a" style="left:540px;top:61px;font-size:17px;line-height:20px;color:#1a1a1a;letter-spacing:0.7px">0.80</div>
<div class="a" style="left:586px;top:59px;width:14px;height:12px;background:#e6e6e6;border:1px solid #c4c4c4"></div>
<div class="a" style="left:586px;top:71px;width:14px;height:12px;background:#e6e6e6;border:1px solid #c4c4c4"></div>
<svg class="a" style="left:586px;top:59px" width="14" height="12" viewBox="0 0 14 12"><path d="M4 8 L7 4.5 L10 8 Z" fill="#111"/></svg>
<svg class="a" style="left:586px;top:71px" width="14" height="12" viewBox="0 0 14 12"><path d="M4 4 L7 7.5 L10 4 Z" fill="#111"/></svg>
<div class="btn" style="left:605px;top:59px;width:24px;height:24px"></div>
<svg class="a" style="left:607px;top:61px" width="20" height="20" viewBox="0 0 20 20"><rect x="1.5" y="2" width="17" height="11.5" rx="1.5" fill="none" stroke="#646464" stroke-width="2"/><rect x="4" y="5" width="1.6" height="1.6" fill="#646464"/><rect x="4" y="8" width="1.6" height="1.6" fill="#646464"/><path d="M8.5 14 H11.5 L12 16 H14 V17.5 H6 V16 H8 Z" fill="#646464"/></svg>
<div class="btn" style="left:634px;top:59px;width:82px;height:24px"></div>
<div class="btn" style="left:722px;top:59px;width:81px;height:24px"></div>
<svg class="a" style="left:643px;top:62px" width="14" height="18" viewBox="0 0 14 18"><path d="M0 2 L14 9 L0 16 Z" fill="#646464"/></svg>
<div class="a lt" style="left:664px;top:63px;font-size:12px">出現再生</div>
<svg class="a" style="left:728px;top:62px" width="14" height="18" viewBox="0 0 14 18"><path d="M14 2 L0 9 L14 16 Z" fill="#646464"/></svg>
<div class="a lt" style="left:751px;top:63px;font-size:12px">消滅再生</div>
<div class="a" style="left:809px;top:61px;width:1px;height:19px;background:#b4b4b4"></div>
<div class="btn" style="left:815px;top:59px;width:24px;height:24px"></div>
<div class="btn" style="left:845px;top:59px;width:24px;height:24px"></div>
<div class="btn" style="left:875px;top:59px;width:24px;height:24px"></div>
<div class="btn" style="left:905px;top:59px;width:24px;height:24px"></div>
<div class="btn" style="left:935px;top:59px;width:24px;height:24px"></div>
<svg class="a" style="left:815px;top:59px" width="24" height="24" viewBox="0 0 24 24"><path d="M4 19.5 V11 A8 8 0 0 1 20 11 V19.5 H15 V11.5 A3 3 0 0 0 9 11.5 V19.5 Z" fill="#646464"/><rect x="5.5" y="14.5" width="2" height="3" fill="#f7f7f7"/><rect x="16.5" y="14.5" width="2" height="3" fill="#f7f7f7"/></svg>
<svg class="a" style="left:848px;top:63px" width="18" height="18" viewBox="0 0 18 18"><rect x="2" y="2" width="14" height="14" fill="#646464"/><rect x="4" y="4" width="2" height="2" fill="#f7f7f7"/><rect x="8" y="4" width="2" height="2" fill="#f7f7f7"/><rect x="12" y="4" width="2" height="2" fill="#f7f7f7"/><rect x="4" y="8" width="2" height="2" fill="#f7f7f7"/><rect x="8" y="8" width="2" height="2" fill="#f7f7f7"/><rect x="12" y="8" width="2" height="2" fill="#f7f7f7"/><rect x="4" y="12" width="2" height="2" fill="#f7f7f7"/><rect x="8" y="12" width="2" height="2" fill="#f7f7f7"/><rect x="12" y="12" width="2" height="2" fill="#f7f7f7"/></svg>
<svg class="a" style="left:877px;top:61px" width="20" height="20" viewBox="0 0 20 20"><path d="M13 1.5 L18.5 7 L10 15.5 L4.5 10 Z" fill="#646464"/><path d="M12.5 5 L15 7.5 M10.5 7 L13 9.5 M8.5 9 L11 11.5" stroke="#f7f7f7" stroke-width="1.2"/><path d="M6 12.5 L3 15.5" stroke="#646464" stroke-width="2.4"/><circle cx="2.8" cy="17.3" r="2.2" fill="#646464"/></svg>
<svg class="a" style="left:907px;top:61px" width="20" height="20" viewBox="0 0 20 20"><path d="M4 3 H13 Q15.5 3 15.5 5.5 V10 Q15.5 12.5 13 12.5 H8.5 L6.5 10 L6.5 6.5 L4 5.5 Z" fill="#646464"/><circle cx="10.5" cy="7.5" r="2.2" fill="#f7f7f7"/><circle cx="10.5" cy="7.5" r="1" fill="#646464"/><rect x="9.5" y="12.5" width="2" height="3" fill="#646464"/><path d="M6 18 L10.5 14.5 L15 18" fill="none" stroke="#646464" stroke-width="1.8"/></svg>
<svg class="a" style="left:937px;top:61px" width="21" height="20" viewBox="0 0 21 20"><rect x="1" y="1.5" width="19" height="17" fill="none" stroke="#646464" stroke-width="2"/><rect x="5" y="6" width="3" height="3" fill="none" stroke="#646464" stroke-width="1.3"/><rect x="12" y="6" width="5" height="2" fill="#646464"/><rect x="12" y="9" width="3" height="6" fill="#646464"/><rect x="4" y="12.5" width="2" height="2" fill="#646464"/><rect x="7.5" y="12.5" width="2" height="2" fill="#646464"/></svg>
<div class="a" style="left:966px;top:61px;width:1px;height:19px;background:#b4b4b4"></div>
<div class="a lt" style="left:972px;top:63px;font-size:12px;color:#a8a8a8">調整</div>
<div class="btn" style="left:1003px;top:59px;width:24px;height:24px"></div>
<div class="btn" style="left:1033px;top:59px;width:24px;height:24px"></div>
<div class="btn" style="left:1063px;top:59px;width:24px;height:24px"></div>
<div class="btn" style="left:1093px;top:59px;width:24px;height:24px"></div>
<svg class="a" style="left:1005px;top:61px" width="20" height="20" viewBox="0 0 20 20"><path d="M6 18 V3.5 M2 7.5 L6 3 L10 7.5" fill="none" stroke="#646464" stroke-width="2.2"/><path d="M14 2 V16.5 M10 12.5 L14 17 L18 12.5" fill="none" stroke="#646464" stroke-width="2.2"/></svg>
<svg class="a" style="left:1035px;top:61px" width="20" height="20" viewBox="0 0 20 20"><path d="M2 6 H17 M13 2 L17.2 6 L13 10" fill="none" stroke="#646464" stroke-width="2.2"/><path d="M18 14 H3 M7 10 L2.8 14 L7 18" fill="none" stroke="#646464" stroke-width="2.2"/></svg>
<svg class="a" style="left:1064px;top:60px" width="22" height="22" viewBox="0 0 22 22"><rect x="1" y="1" width="20" height="20" rx="1.5" fill="none" stroke="#646464" stroke-width="2"/><path d="M4.5 11 H17.5 M8 7.5 L4.5 11 L8 14.5 M14 7.5 L17.5 11 L14 14.5" fill="none" stroke="#646464" stroke-width="2"/></svg>
<svg class="a" style="left:1094px;top:60px" width="22" height="22" viewBox="0 0 22 22"><rect x="1" y="1" width="20" height="20" rx="1.5" fill="none" stroke="#646464" stroke-width="2"/><path d="M11 4.5 V17.5 M7.5 8 L11 4.5 L14.5 8 M7.5 14 L11 17.5 L14.5 14" fill="none" stroke="#646464" stroke-width="2"/></svg>
<div class="a" style="left:1123px;top:61px;width:1px;height:19px;background:#b4b4b4"></div>
<div class="btn" style="left:1129px;top:59px;width:60px;height:24px"></div>
<svg class="a" style="left:1133px;top:61px" width="22" height="21" viewBox="0 0 22 21"><rect x="1" y="8" width="2.5" height="9" fill="#646464"/><rect x="1" y="8" width="4.5" height="1.8" fill="#646464"/><rect x="3.5" y="8" width="2" height="9" fill="#646464"/><rect x="9" y="2" width="3" height="15" fill="#646464"/><circle cx="17" cy="14.5" r="2.5" fill="#646464"/><rect x="1" y="18.5" width="20" height="1.6" fill="#646464"/></svg>
<div class="a lt" style="left:1157px;top:63px;font-size:12px">配置</div>
<div class="a" style="left:1184px;top:78px;width:6px;height:6px;border-radius:50%;background:#1477e6"></div>
<div class="a" style="left:1195px;top:61px;width:1px;height:19px;background:#b4b4b4"></div>
<div class="btn" style="left:1201px;top:59px;width:24px;height:24px"></div>
<div class="btn" style="left:1231px;top:59px;width:24px;height:24px"></div>
<svg class="a" style="left:1201px;top:59px" width="24" height="24" viewBox="0 0 24 24"><path d="M3.8 21 V9.5 Q3.8 7.6 5.8 7.3 L8.8 7.1 L10.2 8.8 V10.8 H13.5" fill="none" stroke="#646464" stroke-width="1.9"/><path d="M4.3 22 L9.3 15.8 L22.3 11.6 L19.2 17.6 L7 21.8 Z" fill="#646464"/><rect x="15.2" y="2" width="3.8" height="4.2" fill="#646464"/><path d="M12.6 5.8 H21.6 L17.1 10.2 Z" fill="#646464"/></svg>
<svg class="a" style="left:1231px;top:59px" width="24" height="24" viewBox="0 0 24 24"><path d="M3.8 21 V9.5 Q3.8 7.6 5.8 7.3 L8.8 7.1 L10.2 8.8 V10.8 H13.5" fill="none" stroke="#646464" stroke-width="1.9"/><path d="M4.3 22 L9.3 15.8 L22.3 11.6 L19.2 17.6 L7 21.8 Z" fill="#646464"/><path d="M12.6 6.8 L17.1 2.2 L21.6 6.8 Z" fill="#646464"/><rect x="15.2" y="6.6" width="3.8" height="4" fill="#646464"/></svg>
<div class="a" style="left:442px;top:89px;width:1101px;height:947px;background:#4d4d4d"></div>
<div class="a" style="left:505px;top:232px;width:1027px;height:579px;border:2px solid #fff"></div>
<div class="a" style="left:544px;top:271px;width:234px;height:502px;border:1px solid #ff0000"></div>
<div class="a" style="left:543px;top:270px;width:3px;height:3px;background:#fff"></div>
<div class="a" style="left:545px;top:272px;width:232px;height:500px;border-radius:7px;border:1px solid #000"></div>
<div class="a" style="left:546px;top:273px;width:230px;height:498px;background:#191919;border:2px solid #f4f4f4;border-radius:6px"></div>
<div class="a" style="left:548px;top:310px;width:226px;height:2px;background:#f4f4f4"></div>
<div class="a" style="left:776px;top:273px;width:382px;height:498px;background:#191919;border:2px solid #f4f4f4;border-radius:6px;box-shadow:0 0 0 1px #000"></div>
<div class="a" style="left:778px;top:310px;width:378px;height:2px;background:#f4f4f4"></div>
<div class="a" style="left:778px;top:616px;width:378px;height:2px;background:#f4f4f4"></div>
<div class="a" style="left:577px;top:282px;color:#fff;font-weight:bold;font-size:19px;line-height:24px;white-space:nowrap">図鑑</div>
<div class="a" style="left:805px;top:282px;color:#fff;font-weight:bold;font-size:19px;line-height:24px;white-space:nowrap">ヒーリング</div>
<div class="a" style="left:577px;top:321px;color:#fff;font-weight:bold;font-size:19px;line-height:24px;white-space:nowrap">ヒーリング</div>
<div class="a" style="left:577px;top:353px;color:#fff;font-weight:bold;font-size:19px;line-height:24px;white-space:nowrap">エリアヒール</div>
<div class="a" style="left:577px;top:385px;color:#fff;font-weight:bold;font-size:19px;line-height:24px;white-space:nowrap">キュアポイズン</div>
<div class="a" style="left:577px;top:417px;color:#fff;font-weight:bold;font-size:19px;line-height:24px;white-space:nowrap">レイズ</div>
<div class="a" style="left:577px;top:449px;color:#fff;font-weight:bold;font-size:19px;line-height:24px;white-space:nowrap">パワーブースト</div>
<div class="a" style="left:577px;top:481px;color:#fff;font-weight:bold;font-size:19px;line-height:24px;white-space:nowrap">ブリンクボディ</div>
<div class="a" style="left:577px;top:513px;color:#fff;font-weight:bold;font-size:19px;line-height:24px;white-space:nowrap">ファイア</div>
<div class="a" style="left:577px;top:545px;color:#fff;font-weight:bold;font-size:19px;line-height:24px;white-space:nowrap">アイス</div>
<div class="a" style="left:577px;top:577px;color:#fff;font-weight:bold;font-size:19px;line-height:24px;white-space:nowrap">サンダー</div>
<div class="a" style="left:577px;top:609px;color:#fff;font-weight:bold;font-size:19px;line-height:24px;white-space:nowrap">ファイア<span style="letter-spacing:-1px">II</span></div>
<div class="a" style="left:577px;top:641px;color:#fff;font-weight:bold;font-size:19px;line-height:24px;white-space:nowrap">アイス<span style="letter-spacing:-1px">II</span></div>
<div class="a" style="left:577px;top:673px;color:#fff;font-weight:bold;font-size:19px;line-height:24px;white-space:nowrap">サンダー<span style="letter-spacing:-1px">II</span></div>
<div class="a" style="left:577px;top:705px;color:#fff;font-weight:bold;font-size:19px;line-height:24px;white-space:nowrap">毒牙</div>
<svg class="a" style="left:550px;top:325px" width="22" height="14" viewBox="0 0 22 14"><path d="M1.5 1.5 L19.5 7 L2 12.5 L6 7 Z" fill="#e8e800"/><path d="M1.5 1.5 L19.5 7 L6 7 Z" fill="#f8f870"/></svg>
<div class="a" style="left:788px;top:630px;color:#fff;font-weight:bold;font-size:19px;line-height:24px;white-space:nowrap">味方ひとりのHPを回復する</div>
<div class="a" style="left:644px;top:753px;width:7px;height:7px;border-radius:50%;background:#8a8a8a"></div>
<div class="a" style="left:656px;top:751px;width:9px;height:10px;border-radius:50%;background:#fff"></div>
<div class="a" style="left:669px;top:753px;width:7px;height:7px;border-radius:50%;background:#8a8a8a"></div>
<svg class="a" style="left:870px;top:380px" width="180" height="170" viewBox="870 380 180 170">
<defs>
<radialGradient id="o1" cx="50%" cy="50%" r="50%"><stop offset="0" stop-color="#fff8d0"/><stop offset="0.35" stop-color="#ffa020"/><stop offset="0.75" stop-color="#ff9000"/><stop offset="0.92" stop-color="#ffb010"/><stop offset="1" stop-color="#ffc830"/></radialGradient>
<radialGradient id="o2" cx="50%" cy="50%" r="50%"><stop offset="0" stop-color="#fff0e0"/><stop offset="0.4" stop-color="#ffa840"/><stop offset="0.8" stop-color="#ff9a10"/><stop offset="1" stop-color="#ffc020"/></radialGradient>
<filter id="bl" x="-50%" y="-50%" width="200%" height="200%"><feGaussianBlur stdDeviation="1.2"/></filter>
<filter id="bl2" x="-50%" y="-50%" width="200%" height="200%"><feGaussianBlur stdDeviation="2.5"/></filter>
</defs>
<circle cx="941" cy="449" r="43" fill="#000" opacity="0.5" filter="url(#bl2)"/>
<circle cx="994.5" cy="498.5" r="32" fill="#000" opacity="0.5" filter="url(#bl2)"/>
<circle cx="941" cy="449" r="40" fill="url(#o1)" filter="url(#bl)"/>
<circle cx="994.5" cy="498.5" r="29.5" fill="url(#o2)" filter="url(#bl)"/>
<g filter="url(#bl)">
<path d="M889 449 L935 445 L941 395 L947 445 L994 449 L947 453 L941 502 L935 453 Z" fill="#fff6c0"/>
<path d="M915 449 L938 446 L941 420 L944 446 L967 449 L944 452 L941 478 L938 452 Z" fill="#fff"/>
<path d="M972 498.5 L990 495.5 L994.5 477 L999 495.5 L1017 498.5 L999 501.5 L994.5 520 L990 501.5 Z" fill="#ffe8d0" opacity="0.9"/><rect x="991.5" y="478" width="6" height="41" fill="#ffd8b0" opacity="0.55"/><rect x="974" y="495.5" width="41" height="6" fill="#ffd8b0" opacity="0.55"/>
</g>
<g filter="url(#bl)" opacity="0.55"><path d="M913 421 L969 477 M969 421 L913 477" stroke="#ffe8a0" stroke-width="3"/><path d="M974 478 L1015 519 M1015 478 L974 519" stroke="#ffe0c0" stroke-width="3"/></g>
<circle cx="941" cy="449" r="8" fill="#fff" filter="url(#bl2)"/>
<circle cx="994.5" cy="498.5" r="6" fill="#fff" opacity="0.9" filter="url(#bl2)"/>
</svg>
<div class="hdr" style="left:1547px;top:32px;width:369px;height:21px;font-weight:bold;color:#d6d6d6">SkillDictionary_2<span class="k" style="display:inline-block;transform:scaleX(0.79);transform-origin:0 0;margin-right:-16.38px">のプロパティ</span></div>
<div class="a" style="left:1547px;top:53px;width:369px;height:983px;background:#aaa"></div>
<div class="a" style="left:1548px;top:54px;width:367px;height:22px;background:#c18c00"></div>
<div class="a lt" style="left:1552px;top:57px;color:#fff"><span class="k" style="display:inline-block;transform:scaleX(0.79);transform-origin:0 0;margin-right:-13.65px">レイアウト</span>全体<span class="k" style="display:inline-block;transform:scaleX(0.79);transform-origin:0 0;margin-right:-2.73px">の</span>設定</div>
<div class="a" style="left:1547px;top:76px;width:369px;height:93px;background:#8e8e8e"></div>
<div class="a" style="left:1549px;top:77px;width:158px;height:22px;background:#f5efd6"></div>
<div class="a" style="left:1708px;top:77px;width:207px;height:22px;background:#f5efd6"></div>
<div class="a lt" style="left:1551px;top:82px">BGM</div>
<div class="a lt" style="left:1711px;top:82px">鳴<span class="k" style="display:inline-block;transform:scaleX(0.79);transform-origin:0 0;margin-right:-10.92px">っている</span>BGM<span class="k" style="display:inline-block;transform:scaleX(0.79);transform-origin:0 0;margin-right:-13.65px">をそのまま</span>再生<span class="k" style="display:inline-block;transform:scaleX(0.79);transform-origin:0 0;margin-right:-5.46px">する</span></div>
<svg class="a" style="left:1898px;top:81px" width="15" height="14" viewBox="0 0 15 14"><path d="M1 7 H13 M8 2 L13 7 L8 12" fill="none" stroke="#909090" stroke-width="1.4"/></svg>
<div class="a" style="left:1549px;top:100px;width:158px;height:22px;background:#f5efd6"></div>
<div class="a" style="left:1708px;top:100px;width:207px;height:22px;background:#f5efd6"></div>
<div class="a lt" style="left:1551px;top:105px">BGS</div>
<div class="a lt" style="left:1711px;top:105px">鳴<span class="k" style="display:inline-block;transform:scaleX(0.79);transform-origin:0 0;margin-right:-10.92px">っている</span>BGS<span class="k" style="display:inline-block;transform:scaleX(0.79);transform-origin:0 0;margin-right:-13.65px">をそのまま</span>再生<span class="k" style="display:inline-block;transform:scaleX(0.79);transform-origin:0 0;margin-right:-5.46px">する</span></div>
<svg class="a" style="left:1898px;top:104px" width="15" height="14" viewBox="0 0 15 14"><path d="M1 7 H13 M8 2 L13 7 L8 12" fill="none" stroke="#909090" stroke-width="1.4"/></svg>
<div class="a" style="left:1549px;top:123px;width:158px;height:22px;background:#f5efd6"></div>
<div class="a" style="left:1708px;top:123px;width:207px;height:22px;background:#f5efd6"></div>
<div class="a lt" style="left:1551px;top:128px"><span class="k" style="display:inline-block;transform:scaleX(0.79);transform-origin:0 0;margin-right:-13.65px">パーティの</span>特殊書式<span class="k" style="display:inline-block;transform:scaleX(0.79);transform-origin:0 0;margin-right:-2.73px">の</span>表示</div>
<div class="a lt" style="left:1711px;top:128px"><span class="k" style="display:inline-block;transform:scaleX(0.79);transform-origin:0 0;margin-right:-8.19px">ゲーム</span>定義<span class="k" style="display:inline-block;transform:scaleX(0.79);transform-origin:0 0;margin-right:-2.73px">を</span>利用<span class="k" style="display:inline-block;transform:scaleX(0.79);transform-origin:0 0;margin-right:-5.46px">する</span></div>
<svg class="a" style="left:1899px;top:126px" width="15" height="15" viewBox="0 0 15 15"><rect x="0.5" y="0.5" width="14" height="14" rx="2" fill="#a0a0a0"/><path d="M2 3 L7.5 8 L13 3 V2 H2 Z" fill="#f0f0f0"/></svg>
<div class="a" style="left:1549px;top:146px;width:158px;height:22px;background:#f5efd6"></div>
<div class="a" style="left:1708px;top:146px;width:207px;height:22px;background:#f5efd6"></div>
<div class="a lt" style="left:1551px;top:151px">表示<span class="k" style="display:inline-block;transform:scaleX(0.79);transform-origin:0 0;margin-right:-16.38px">するスキルの</span>管理<span class="k" style="display:inline-block;transform:scaleX(0.79);transform-origin:0 0;margin-right:-5.46px">タグ</span></div>
<div class="a lt" style="left:1711px;top:151px"></div>
<svg class="a" style="left:1898px;top:150px" width="15" height="14" viewBox="0 0 15 14"><path d="M1 7 H13 M8 2 L13 7 L8 12" fill="none" stroke="#909090" stroke-width="1.4"/></svg>
</body></html>
